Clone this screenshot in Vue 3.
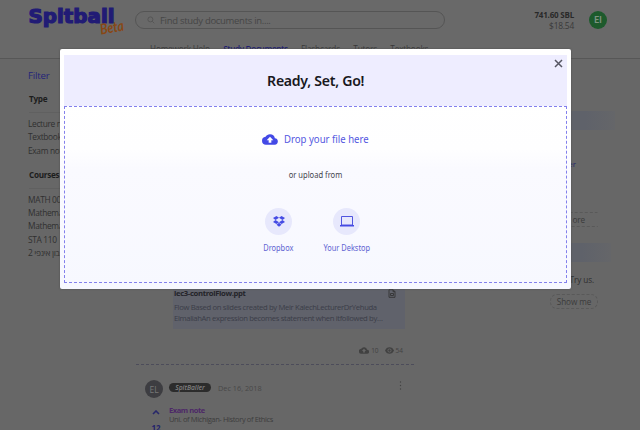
<script setup>
const tabs = ['Homework Help', 'Study Documents', 'Flashcards', 'Tutors', 'Textbooks']
const filters = [
  { title: 'Type', items: ['Lecture n', 'Textbook', 'Exam not'] },
  { title: 'Courses', items: ['MATH 00', 'Mathema', 'Mathema', 'STA 110', 'בון אינפי 2'] },
]
</script>

<template>
  <div class="page">
    <header class="header">
      <div class="topbar">
        <svg class="logo" width="100" height="32" viewBox="0 0 100 32">
          <text class="logo-name" x="0.500" y="17" textLength="86" lengthAdjust="spacingAndGlyphs">Spitball</text>
          <text class="logo-beta" x="73" y="28.500" textLength="24" lengthAdjust="spacingAndGlyphs" transform="rotate(-10 73 28.500)">Beta</text>
        </svg>
        <div class="search">
          <svg width="8" height="8" viewBox="0 0 8 8"><circle cx="3.4" cy="3.4" r="2.5" /><path d="M5.3 5.3 7.3 7.3" /></svg>
          <span>Find study documents in....</span>
        </div>
        <div class="balance"><b>741.60 SBL</b><span>$18.54</span></div>
        <div class="avatar user">EI</div>
      </div>
      <nav class="tabs">
        <span v-for="(t, i) in tabs" :key="t" :class="{ active: i === 1 }">{{ t }}</span>
      </nav>
    </header>

    <div class="columns">
      <aside class="sidebar">
        <div class="filter-title">Filter</div>
        <section v-for="f in filters" :key="f.title" class="group">
          <h4>{{ f.title }}</h4>
          <ul><li v-for="(item, i) in f.items" :key="i">{{ item }}</li></ul>
        </section>
      </aside>

      <main class="feed">
        <article class="first">
          <div class="doc">
            <div class="doc-head">
              <b>lec3-controlFlow.ppt</b>
              <svg width="8" height="9" viewBox="0 0 8 9"><path d="M1 .7h4l2 2v5.6H1zM5 .7v2h2M2.5 6.5v-2h3v2z" /></svg>
            </div>
            <p class="l1">Flow Based on slides created by Meir KalechLecturerDrYehuda</p>
            <p class="l2">ElmaliahAn expression becomes statement when itfollowed by…</p>
          </div>
          <div class="stats">
            <svg width="10" height="7" viewBox="0 0 24 16"><path fill-rule="evenodd" d="M19.4 6A7.5 7.5 0 0 0 5.4 4 6 6 0 0 0 6 16h13a5 5 0 0 0 .4-10zM14 9v4h-4V9H7l5-5 5 5z" /></svg>
            <span>10</span>
            <svg class="eye" width="9" height="7" viewBox="0 0 22 16"><path fill-rule="evenodd" d="M11 0C6 0 2 3 0 8c2 5 6 8 11 8s9-3 11-8c-2-5-6-8-11-8zm0 13a5 5 0 1 1 0-10 5 5 0 0 1 0 10zm0-8a3 3 0 1 0 0 6 3 3 0 0 0 0-6z" /></svg>
            <span>54</span>
          </div>
        </article>
        <article>
          <div class="post-head">
            <div class="avatar author">EL</div>
            <span class="badge">SpitBaller</span>
            <span class="date">Dec 16, 2018</span>
            <svg class="more" width="3" height="9" viewBox="0 0 3 9"><circle cx="1.5" cy="1" r=".7" /><circle cx="1.5" cy="4.5" r=".7" /><circle cx="1.5" cy="8" r=".7" /></svg>
          </div>
          <div class="post-body">
            <div class="votes">
              <svg width="8" height="5" viewBox="0 0 8 5"><path d="M1 4 4 1l3 3" /></svg>
              <b>12</b>
            </div>
            <div class="post-text"><b>Exam note</b><span>Uni. of Michigan- History of Ethics</span></div>
          </div>
        </article>
      </main>

      <aside class="promo">
        <div class="band one"></div>
        <span class="link">er</span>
        <span class="pill wide">ore</span>
        <div class="band two"></div>
        <span class="try">Try us.</span>
        <span class="pill">Show me</span>
      </aside>
    </div>

    <div class="dialog">
      <div class="dialog-head">
        <h1>Ready, Set, Go!</h1>
        <svg class="close" width="9" height="9" viewBox="0 0 9 9"><path d="M1 1 8 8M8 1 1 8" /></svg>
      </div>
      <div class="dropzone">
        <div class="drop">
          <svg width="16" height="11" viewBox="0 0 24 16"><path fill-rule="evenodd" d="M19.35 6.04A7.49 7.49 0 0 0 12 0C9.11 0 6.6 1.64 5.35 4.04A6 6 0 0 0 6 16h13a5 5 0 0 0 .35-9.96zM14 9v4h-4V9H7l5-5 5 5z" /></svg>
          <span>Drop your file here</span>
        </div>
        <div class="or">or upload from</div>
        <div class="sources">
          <div class="source">
            <i><svg width="12" height="11" viewBox="0 0 24 22"><path d="M7 0 12 3.5 5 8 0 4zM17 0l7 4-5 4-7-4.500zM0 12l5-4 7 4.500L7 16zM24 12l-5-4-7 4.500 5 3.500zM7 17.500l5-3.800 5 3.800-5 4z" /></svg></i>
            <span>Dropbox</span>
          </div>
          <div class="source">
            <i><svg width="14" height="11" viewBox="0 0 14 11"><path class="screen" d="M1.500.5h11v8.500h-11z" /><path d="M0 9h14v1.500H0z" /></svg></i>
            <span>Your Dekstop</span>
          </div>
        </div>
      </div>
    </div>
  </div>
</template>

<style>
body { margin: 0; overflow: hidden; background: #676767; }
</style>

<style scoped>
* { box-sizing: border-box; }
.page { position: relative; width: 640px; height: 430px; overflow: hidden; background: #676767; color: #363636; font: 8px/13px "Open Sans", "Noto Sans", "DejaVu Sans", sans-serif; white-space: nowrap; }
.header { height: 59px; border-bottom: 1px solid #575757; background: #696969; }
.topbar { display: flex; height: 40px; padding-left: 28px; }
.logo { margin-top: 6px; overflow: visible; flex: none; }
.logo-name { font: bold 19px "DejaVu Sans", sans-serif; fill: #211b75; stroke: #211b75; stroke-width: 1.200px; }
.logo-beta { font: italic bold 14.500px "Lato", sans-serif; fill: #884714; }
.search { display: flex; align-items: center; width: 310px; height: 18px; margin: 11px 0 0 7px; padding-left: 11px; border: 1px solid #555; border-radius: 9px; color: #464646; font-size: 9.500px; letter-spacing: -.3px; }
.search svg { margin-right: 5px; fill: none; stroke: #525252; stroke-width: .8; }
.balance { display: flex; flex-direction: column; align-items: flex-end; width: 129px; padding-top: 10px; line-height: 10.500px; color: #3a3a3a; }
.balance b { font-size: 8px; letter-spacing: -.2px; color: #292929; }
.balance span { font-size: 8.400px; letter-spacing: -.2px; }
.avatar { display: flex; align-items: center; justify-content: center; width: 18px; height: 18px; border-radius: 50%; }
.user { margin: 11px 0 0 15px; background: #1d5a2c; color: #7d9381; font: bold 8.500px "Roboto", sans-serif; }
.tabs { display: flex; gap: 13.400px; padding-left: 150px; margin-top: 2px; font-size: 8.200px; letter-spacing: -.16px; color: #3a3a3a; }
.tabs .active { color: #211f70; font-weight: 600; letter-spacing: -.36px; }
.columns { display: flex; height: 371px; }
.sidebar { width: 136px; padding: 9px 0 0 28px; }
.filter-title { height: 15px; font-size: 9.600px; line-height: 15px; letter-spacing: -.15px; color: #24247a; }
h4 { margin: 0 0 4px 1px; padding: 9px 0 6px; font-size: 8.200px; line-height: 14px; letter-spacing: -.3px; color: #1d1d1d; border-bottom: 1px solid #606060; }
ul { margin: 0; padding: 0; list-style: none; }
li { width: 50px; height: 13.400px; line-height: 13.400px; font-size: 8.400px; letter-spacing: -.34px; color: #303030; }
.group:first-of-type { margin-bottom: 1.500px; }
.feed { width: 278px; }
.first { height: 306px; padding-top: 227px; border-bottom: 1px dashed #4c4c5a; }
.doc { width: 232px; height: 43px; margin-left: 37px; background: #60626b; font-size: 7.700px; color: #3b3d48; }
.doc-head { display: flex; justify-content: space-between; align-items: center; height: 14px; padding: 0 9px 0 1px; color: #242429; letter-spacing: -.35px; }
.doc-head svg { fill: none; stroke: #333; stroke-width: .9; }
.doc p { margin: 0; padding-left: 1px; line-height: 11px; }
.doc .l1 { margin-top: 2px; letter-spacing: -.35px; }
.doc .l2 { letter-spacing: -.36px; }
.stats { display: flex; align-items: center; justify-content: flex-end; gap: 2px; margin-top: 15px; padding-right: 11px; font-size: 6.500px; color: #424242; fill: #414141; }
.eye { margin-left: 4px; }
.post-head { display: flex; align-items: flex-start; height: 38px; padding: 20px 12px 0 9px; }
.author { margin: -5px 0 0; background: #3d3d41; color: #777; font-size: 8.500px; }
.badge { width: 42px; height: 9px; margin: -2px 7px 0 6px; border-radius: 5px; background: #2c2c2c; color: #818181; font: italic 600 6.700px/9px "Open Sans", sans-serif; text-align: center; }
.date { margin-top: -3px; font-size: 7.300px; color: #484848; }
.more { margin-left: auto; margin-top: -4px; fill: #424242; }
.post-body { display: flex; padding-left: 15px; }
.votes { display: flex; flex-direction: column; align-items: center; width: 10px; color: #22226c; }
.votes svg { margin-top: 7px; fill: none; stroke: #27276a; stroke-width: 1.600; }
.votes b { margin-top: 6px; }
.post-text { display: flex; flex-direction: column; margin-left: 8px; padding-top: 3px; line-height: 9px; font-size: 7.500px; }
.post-text b { color: #4d2868; letter-spacing: -.42px; }
.post-text span { color: #3d3d3d; letter-spacing: -.38px; }
.promo { display: flex; flex-direction: column; align-items: flex-end; width: 184px; }
.band { width: 120px; height: 19px; background: linear-gradient(90deg, #5f626a 75%, #656669); }
.one { margin: 52px -17px 0 0; }
.link { margin: 27px 22px 0 0; color: #25276a; }
.pill { width: 48px; height: 15px; border: 1px dashed #595959; border-radius: 7px; text-align: center; line-height: 13px; font-size: 8.200px; letter-spacing: -.1px; color: #3b3b3b; }
.wide { width: 100px; margin-top: 42px; padding-right: 13px; text-align: right; border-radius: 1px; border-right: 0; }
.two { margin: 16px -13px 0 0; }
.try { margin: 11px 4px 8px 0; color: #2e2e2e; font-size: 8.200px; letter-spacing: -.1px; }
.dialog { position: absolute; left: 60px; top: 49px; width: 511px; height: 240px; padding: 6px 4px; border-radius: 2px; background: linear-gradient(#fff 20%, #fefeff 42%, #fafaff 50%, #f7f8ff); color: #18181d; font-family: "Noto Sans", "Open Sans", sans-serif; box-shadow: 0 0 2px #4b4b4b; }
.dialog-head { position: relative; display: flex; align-items: center; justify-content: center; height: 51px; background: #eeedff; }
h1 { margin: 0 0 1px; font: 600 15px/20px "Noto Sans", "Open Sans", sans-serif; transform: scaleX(.94); letter-spacing: -.3px; }
.close { position: absolute; right: 4px; top: 4px; fill: none; stroke: #565663; stroke-width: 1.500; }
.dropzone { display: flex; flex-direction: column; align-items: center; height: 177px; padding-top: 23px; border: 1px dashed #8380ed; }
.drop { display: flex; align-items: center; gap: 6px; height: 18px; fill: #4349e6; }
.drop span { width: 85px; color: #5457df; font-size: 10.800px; line-height: 18px; transform: scaleX(.888); transform-origin: left; }
.or { margin-top: 21px; line-height: 13px; font-size: 8.600px; color: #44444c; transform: scaleX(.88); }
.sources { display: flex; gap: 14px; margin: 26px 6px 0 0; }
.source { display: flex; flex-direction: column; align-items: center; width: 54px; font-size: 8.500px; color: #6063d2; }
.source span { transform: scaleX(.87); }
.source i { display: flex; align-items: center; justify-content: center; width: 27px; height: 27px; margin-bottom: 6px; border-radius: 50%; background: #e7e8fc; fill: #454be4; }
.screen { fill: none; stroke: #5055df; stroke-width: 1; }
</style>
